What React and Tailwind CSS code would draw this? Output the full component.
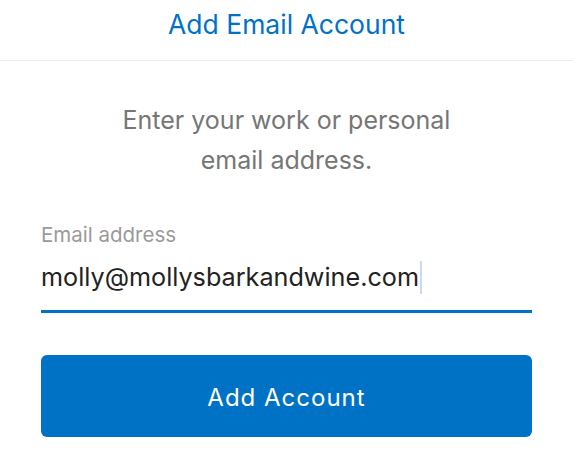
import React from 'react';

const App = () => {
  return (
    <div className="min-h-screen bg-white font-['Inter',sans-serif]">
      {/* Header */}
      <div className="h-[61px] border-b border-[#ececec] flex items-center justify-center">
        <h1 className="text-[26.5px] font-normal text-[#0072c6] -mt-[10px]">Add Email Account</h1>
      </div>

      <div className="px-[41px]">
        <p className="mt-[39px] text-center text-[25px] leading-[40px] text-[#767676]">
          Enter your work or personal
          <br />
          email address.
        </p>

        {/* Email field */}
        <div className="mt-[43px]">
          <label className="block text-[20.5px] leading-[24px] text-[#9a9a9a]">Email address</label>
          <div className="mt-[12px] pb-[15px] border-b-[3px] border-[#0072c6] flex items-center">
            <span className="text-[25.2px] leading-[36px] text-[#222222]">molly@mollysbarkandwine.com</span>
            <span className="ml-[1px] w-[2px] h-[33px] bg-[#c9d8f6]"></span>
          </div>
        </div>

        {/* Button */}
        <button className="mt-[42px] w-full h-[82px] pt-[3px] rounded-[6px] bg-[#0072c6] text-white text-[24px] tracking-[1px] font-normal">
          Add Account
        </button>
      </div>
    </div>
  );
};

export default App;
